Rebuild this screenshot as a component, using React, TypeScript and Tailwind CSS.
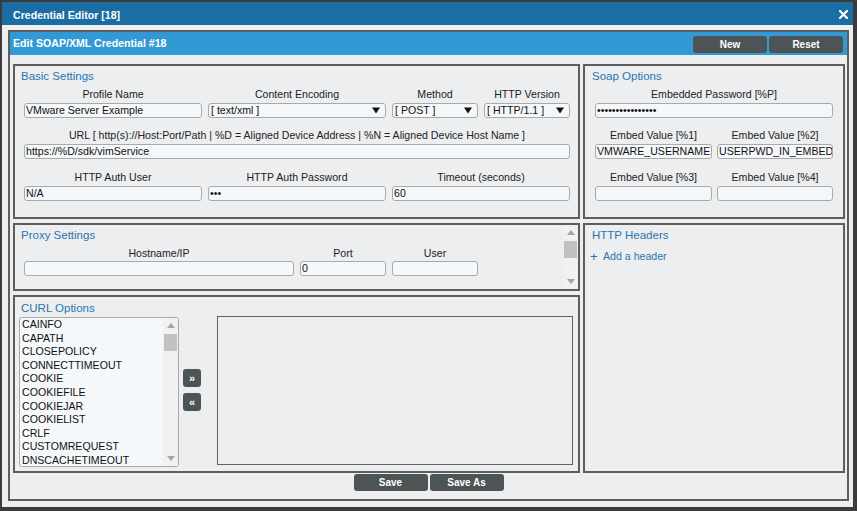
import React from 'react'

const curlOptions = [
  'CAINFO',
  'CAPATH',
  'CLOSEPOLICY',
  'CONNECTTIMEOUT',
  'COOKIE',
  'COOKIEFILE',
  'COOKIEJAR',
  'COOKIELIST',
  'CRLF',
  'CUSTOMREQUEST',
  'DNSCACHETIMEOUT',
]

function Label({ children }: { children: React.ReactNode }) {
  return (
    <div className="h-[13px] text-center text-[10.6px] leading-[13px] text-[#222] whitespace-nowrap">
      {children}
    </div>
  )
}

function Field({ value = '', className = '' }: { value?: string; className?: string }) {
  return (
    <div
      className={
        'h-[15px] border border-[#a9a9a9] rounded-[3px] bg-[#f5f8fa] pl-[1px] text-[10.6px] leading-[13px] text-[#111] overflow-hidden whitespace-nowrap ' +
        className
      }
    >
      {value}
    </div>
  )
}

function Select({ value }: { value: string }) {
  return (
    <div className="h-[15px] border border-[#a9a9a9] rounded-[3px] bg-[#f5f8fa] pl-[2px] pr-[5px] flex items-center justify-between text-[10.6px] leading-[13px] text-[#111] whitespace-nowrap">
      <span>{value}</span>
      <svg width="8" height="7" viewBox="0 0 8 7">
        <path d="M0 0.5 L8 0.5 L4 6.5 Z" fill="#111" />
      </svg>
    </div>
  )
}

function Title({ children }: { children: React.ReactNode }) {
  return <div className="h-[13px] text-[11.5px] leading-[13px] text-[#2a75ad]">{children}</div>
}

function Arrow({ up }: { up?: boolean }) {
  return (
    <div className="h-[15px] flex items-center justify-center">
      <svg width="8" height="5" viewBox="0 0 8 5">
        <path d={up ? 'M0 5 L4 0 L8 5 Z' : 'M0 0 L8 0 L4 5 Z'} fill="#a3a3a3" />
      </svg>
    </div>
  )
}

function Scrollbar() {
  return (
    <div className="w-[15px] h-full flex flex-col bg-[#f1f1f1]">
      <Arrow up />
      <div className="mx-[1px] mt-[1px] h-[17px] bg-[#c1c1c1]" />
      <div className="flex-1" />
      <Arrow />
    </div>
  )
}

function DarkButton({ children, className = '' }: { children: React.ReactNode; className?: string }) {
  return (
    <div
      className={
        'bg-[#4c5456] rounded-[3px] text-white font-bold text-[10px] flex items-center justify-center ' + className
      }
    >
      {children}
    </div>
  )
}

export default function App() {
  return (
    <div className="w-[857px] h-[511px] bg-[#3b3b3b] pt-[2px] pl-[2px] pr-[4px] pb-[4px] flex flex-col font-['Liberation_Sans',Arial,sans-serif]">
      {/* window title */}
      <div className="h-[23px] shrink-0 bg-[#1b6ea3] flex items-start justify-between pt-[7px] pl-[11px] pr-[5px]">
        <span className="text-white font-bold text-[10.6px] leading-[13px]">Credential Editor [18]</span>
        <svg width="9" height="9" viewBox="0 0 9 9" className="mt-[1px]">
          <path d="M1 1 L8 8 M8 1 L1 8" stroke="#fff" strokeWidth="2.2" strokeLinecap="square" />
        </svg>
      </div>

      <div className="flex-1 bg-[#edeef0] pt-[5px] pl-[6px] pr-[4px] pb-[6px]">
        <div className="h-full border-2 border-[#5d5d5d] flex flex-col">
          {/* editor header */}
          <div className="h-[23px] shrink-0 bg-[#3399d5] flex items-start justify-between pl-[3px] pr-[4px]">
            <span className="mt-[5px] text-white font-bold text-[10.6px] leading-[13px]">
              Edit SOAP/XML Credential #18
            </span>
            <div className="flex gap-[2px] mt-[4px]">
              <DarkButton className="w-[74px] h-[17px]">New</DarkButton>
              <DarkButton className="w-[74px] h-[17px]">Reset</DarkButton>
            </div>
          </div>

          <div className="pt-[9px] pl-[3px] pr-[2px] flex gap-[3px]">
            {/* left column */}
            <div className="w-[567px] flex flex-col">
              <div className="h-[155px] border-2 border-[#5d5d5d] pt-[4px]">
                <div className="pl-[6px]">
                  <Title>Basic Settings</Title>
                </div>
                <div className="pl-[9px] mt-[5px] grid grid-cols-[178px_178px_86px_86px] gap-x-[6px]">
                  <Label>Profile Name</Label>
                  <Label>Content Encoding</Label>
                  <Label>Method</Label>
                  <Label>HTTP Version</Label>
                  <Field value="VMware Server Example" className="mt-[2px]" />
                  <div className="mt-[2px]">
                    <Select value="[ text/xml ]" />
                  </div>
                  <div className="mt-[2px]">
                    <Select value="[ POST ]" />
                  </div>
                  <div className="mt-[2px]">
                    <Select value="[ HTTP/1.1 ]" />
                  </div>
                </div>
                <div className="pl-[9px] w-[555px] mt-[11px]">
                  <Label>URL [ http(s)://Host:Port/Path | %D = Aligned Device Address | %N = Aligned Device Host Name ]</Label>
                  <Field value="https://%D/sdk/vimService" className="mt-[2px]" />
                </div>
                <div className="pl-[9px] mt-[12px] grid grid-cols-[178px_178px_178px] gap-x-[6px]">
                  <Label>HTTP Auth User</Label>
                  <Label>HTTP Auth Password</Label>
                  <Label>Timeout (seconds)</Label>
                  <Field value="N/A" className="mt-[2px]" />
                  <Field value="•••" className="mt-[2px]" />
                  <Field value="60" className="mt-[2px]" />
                </div>
              </div>

              <div className="h-[68px] mt-[4px] border-2 border-[#5d5d5d] flex">
                <div className="flex-1 pt-[4px]">
                  <div className="pl-[6px]">
                    <Title>Proxy Settings</Title>
                  </div>
                  <div className="pl-[9px] mt-[5px] grid grid-cols-[270px_86px_86px] gap-x-[6px]">
                    <Label>Hostname/IP</Label>
                    <Label>Port</Label>
                    <Label>User</Label>
                    <Field className="mt-[1px]" />
                    <Field value="0" className="mt-[1px]" />
                    <Field className="mt-[1px]" />
                  </div>
                </div>
                <Scrollbar />
              </div>

              <div className="h-[178px] mt-[4px] border-2 border-[#5d5d5d] pt-[5px]">
                <div className="pl-[6px]">
                  <Title>CURL Options</Title>
                </div>
                <div className="flex items-start pl-[4px] mt-[2px]">
                  <div className="w-[160px] h-[150px] border border-[#a9a9a9] rounded-[3px] bg-[#f5f8fa] flex overflow-hidden">
                    <div className="flex-1 pl-[2px] overflow-hidden">
                      {curlOptions.map((o) => (
                        <div key={o} className="text-[10.6px] leading-[13.6px] text-[#111] whitespace-nowrap">
                          {o}
                        </div>
                      ))}
                    </div>
                    <Scrollbar />
                  </div>
                  <div className="ml-[4px] mt-[52px] flex flex-col gap-[6px]">
                    <DarkButton className="w-[18px] h-[18px] text-[11px]">»</DarkButton>
                    <DarkButton className="w-[18px] h-[18px] text-[11px]">«</DarkButton>
                  </div>
                  <div className="ml-[16px] -mt-[1px] w-[356px] h-[149px] border border-[#626262]" />
                </div>
              </div>
            </div>

            {/* right column */}
            <div className="w-[262px] flex flex-col">
              <div className="h-[155px] border-2 border-[#5d5d5d] pt-[4px]">
                <div className="pl-[7px]">
                  <Title>Soap Options</Title>
                </div>
                <div className="px-[10px] mt-[5px]">
                  <Label>Embedded Password [%P]</Label>
                  <Field value={'•'.repeat(16)} className="mt-[2px]" />
                </div>
                <div className="px-[10px] mt-[11px] grid grid-cols-[117px_116px] gap-x-[5px]">
                  <Label>Embed Value [%1]</Label>
                  <Label>Embed Value [%2]</Label>
                  <Field value="VMWARE_USERNAME" className="mt-[2px]" />
                  <Field value="USERPWD_IN_EMBED" className="mt-[2px]" />
                </div>
                <div className="px-[10px] mt-[12px] grid grid-cols-[117px_116px] gap-x-[5px]">
                  <Label>Embed Value [%3]</Label>
                  <Label>Embed Value [%4]</Label>
                  <Field className="mt-[2px]" />
                  <Field className="mt-[2px]" />
                </div>
              </div>

              <div className="h-[250px] mt-[4px] border-2 border-[#5d5d5d] pt-[4px]">
                <div className="pl-[7px]">
                  <Title>HTTP Headers</Title>
                </div>
                <div className="pl-[5px] mt-[8px] flex items-center text-[#2a75ad]">
                  <span className="text-[13px] leading-[13px] w-[13px]">+</span>
                  <span className="text-[10.6px] leading-[13px]">Add a header</span>
                </div>
              </div>
            </div>
          </div>

          {/* footer buttons */}
          <div className="mt-[1px] flex justify-center gap-[2px]">
            <DarkButton className="w-[74px] h-[17px]">Save</DarkButton>
            <DarkButton className="w-[74px] h-[17px]">Save As</DarkButton>
          </div>
        </div>
      </div>
    </div>
  )
}
